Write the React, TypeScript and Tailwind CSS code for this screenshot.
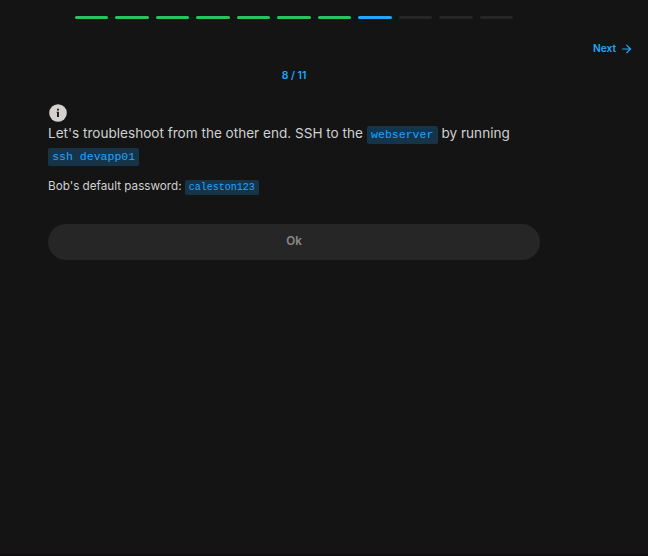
const done = "bg-[#27c45d]";
const active = "bg-[#1fa7ff]";
const todo = "bg-[#262626]";
const steps = [done, done, done, done, done, done, done, active, todo, todo, todo];

export default function App() {
  return (
    <div className="flex h-[556px] w-[648px] flex-col overflow-hidden border-b-2 border-[#100c10] bg-[#141414] font-['Inter',sans-serif] text-[#d0d0d0]">
      <div className="ml-[75px] mt-4 flex h-[3px] w-[438px] shrink-0 gap-[7px]">
        {steps.map((color, i) => (
          <div key={i} className={`h-[3px] flex-1 rounded-full ${color}`} />
        ))}
      </div>
      <button className="mr-4 mt-[22px] flex h-4 items-center gap-[5px] self-end text-[10.15px] font-semibold leading-4 text-[#1fa7ff]">
        <span className="pb-[2px]">Next</span>
        <svg width="11" height="10" viewBox="0 0 11 10" fill="none" stroke="currentColor" strokeWidth="1.2">
          <path d="M1.2 5h8.2M5.4 .8L9.6 5L5.4 9.2" />
        </svg>
      </button>
      <div className="ml-12 mt-[10px] flex h-[18px] w-[492px] items-center justify-center text-[10.4px] font-semibold text-[#1fa7ff]">
        8 / 11
      </div>
      <main className="ml-12 mt-[19px] w-[492px]">
        <svg width="20" height="18" viewBox="0 0 20 18">
          <circle cx="10" cy="9" r="8.8" fill="#d3d2d0" />
          <path d="M9 4.7h2v1.8H9zM8.6 7.8H11v5.2H9V8.8h-.4z" fill="#202020" />
        </svg>
        <p className="flex h-[22px] items-center whitespace-pre text-[13.57px] leading-[22px]">
          <span>Let's troubleshoot from the other end. SSH to the </span>
          <code className="mt-1 h-[18px] rounded-[2px] bg-[#173347] px-[4.4px] font-['Liberation_Mono',monospace] text-[11.53px] leading-[18px] text-[#1fa7ff]">webserver</code>
          <span> by running</span>
        </p>
        <p className="flex h-[22px] items-center">
          <code className="mt-1 h-[18px] rounded-[2px] bg-[#173347] px-[4.2px] font-['Liberation_Mono',monospace] text-[11.53px] leading-[18px] text-[#1fa7ff]">ssh devapp01</code>
        </p>
        <p className="mt-[10px] flex h-5 items-center whitespace-pre text-[11.7px]">
          <span className="pt-[2px]">Bob's default password: </span>
          <code className="mt-[3px] h-[15px] rounded-[2px] bg-[#173347] px-1 font-['Liberation_Mono',monospace] text-[10px] leading-[15px] text-[#1fa7ff]">caleston123</code>
        </p>
        <button className="mt-[28px] flex h-9 w-full items-center justify-center rounded-full bg-[#262626] text-[11.7px] font-semibold text-[#8a8a8a]">
          Ok
        </button>
      </main>
    </div>
  );
}
